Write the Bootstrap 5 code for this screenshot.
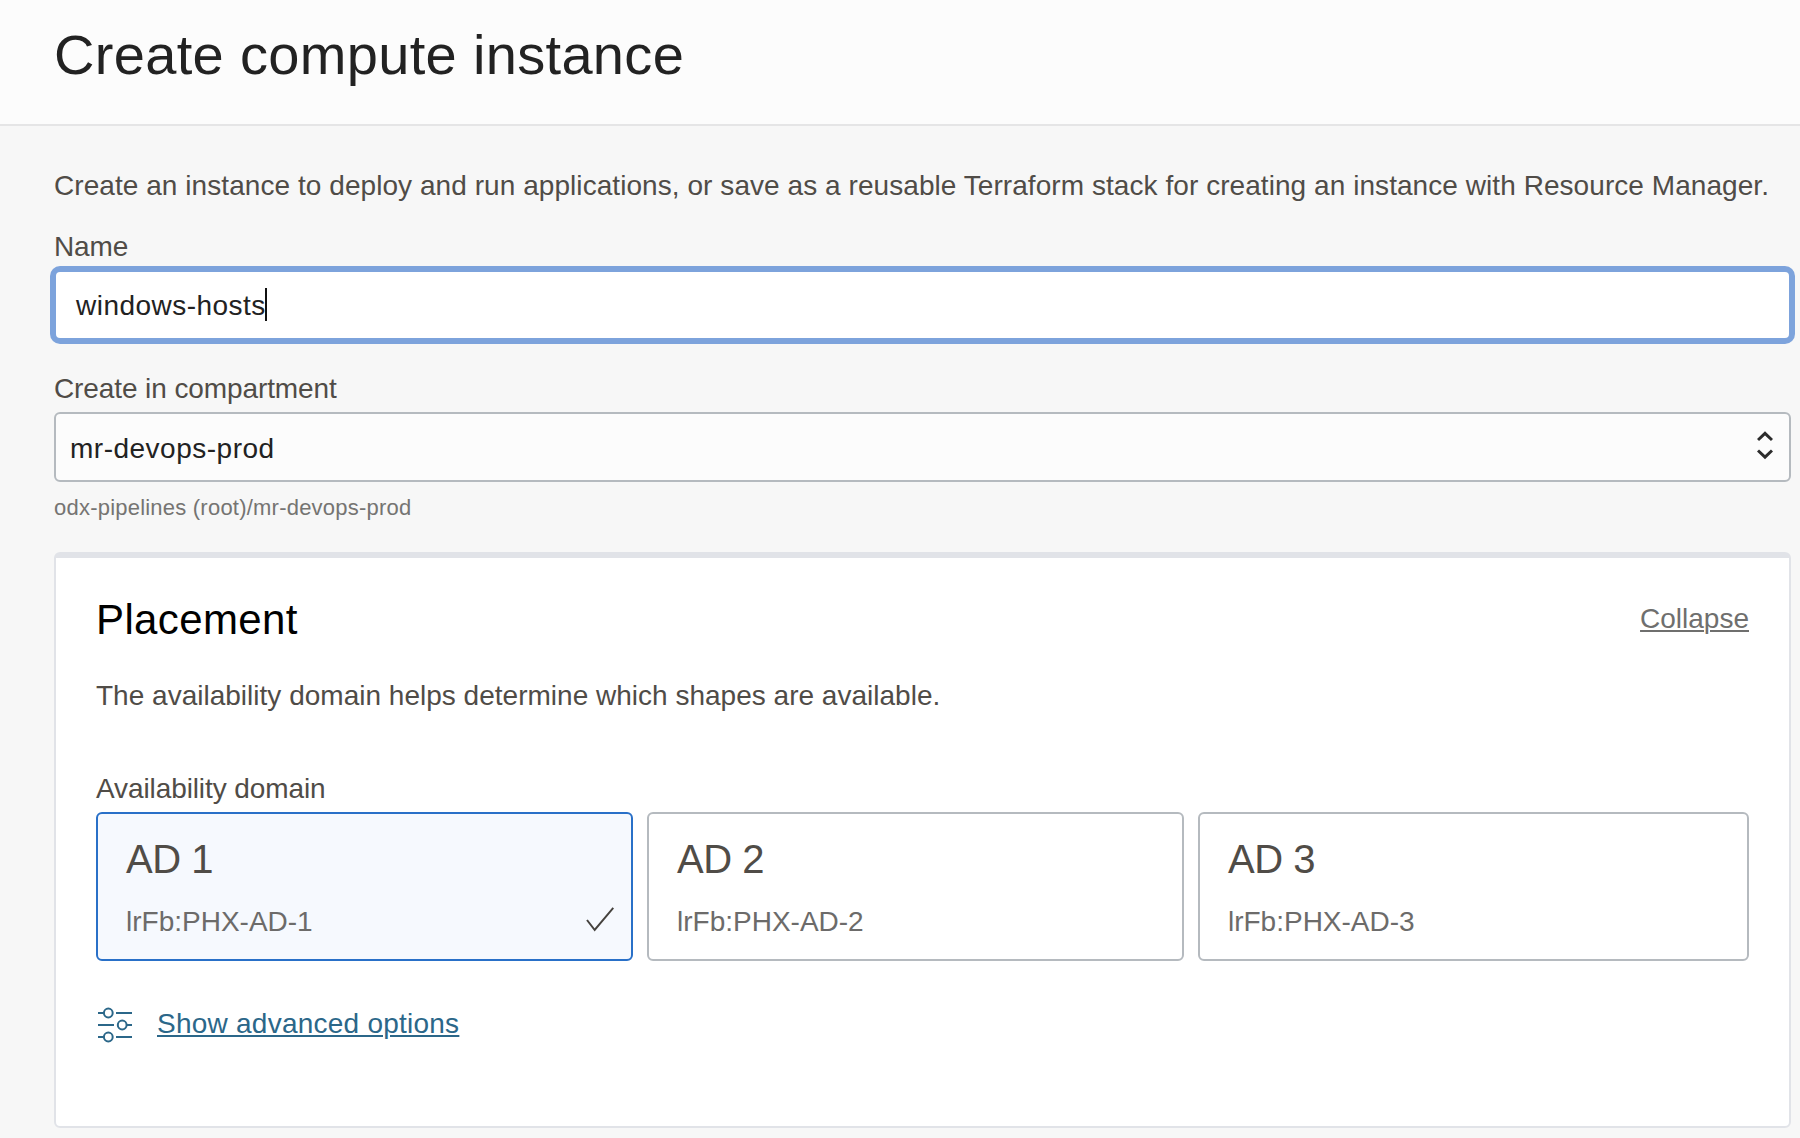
<!DOCTYPE html>
<html lang="en">
<head>
<meta charset="utf-8">
<meta name="viewport" content="width=device-width, initial-scale=1">
<title>Create compute instance</title>
<link href="https://cdn.jsdelivr.net/npm/bootstrap@5.3.0/dist/css/bootstrap.min.css" rel="stylesheet">
<style>
  body { font-family: "Liberation Sans", Arial, sans-serif; font-size: 28px; line-height: 38px; color: #504c47; background: #f7f7f7; min-height: 1138px; overflow: hidden; }
  .page-head { height: 126px; background: #fcfcfc; border-bottom: 2px solid #e5e5e6; padding: 23px 0 0 54px; }
  .page-title { font-size: 56px; line-height: 64px; font-weight: 400; color: #222; letter-spacing: .33px; }
  .page-main { padding: 41px 9px 0 54px; }
  .intro { margin-bottom: 23px; letter-spacing: .06px; white-space: nowrap; }
  .form-label { margin-bottom: 4px; display: block; letter-spacing: -.1px; }
  .field-box { height: 70px; border: 2px solid #b5babf; border-radius: 6px; color: #222; background: #fcfcfc; }
  .field-focus { border-color: #7da3dc; box-shadow: 0 0 0 4px #7da3dc; background: #fff; padding: 2px 0 0 20px; margin-bottom: 30px; letter-spacing: .47px; }
  .field-select { padding: 4px 16px 0 14px; letter-spacing: .5px; }
  .chevrons { margin-top: -8px; }
  .text-caret { width: 2px; height: 33px; background: #111; margin: -3px 0 0 -1px; }
  .path-hint { font-size: 22px; line-height: 30px; color: #757472; letter-spacing: .22px; margin: 11px 0 29px; }
  .placement { height: 576px; border: 2px solid #e1e3e8; border-top-width: 6px; border-radius: 6px; background: #fff; }
  .placement .card-body { padding: 36px 40px 0; }
  .section-title { font-size: 42px; line-height: 52px; font-weight: 400; color: #000; letter-spacing: .38px; }
  .section-text { margin: 31px 0 55px; letter-spacing: .01px; }
  a { text-decoration-thickness: 2px; text-underline-offset: 2px; }
  .link-collapse { color: #6f6f6e; margin-top: 6px; }
  .link-advanced { color: #2b6789; letter-spacing: .24px; margin-left: 23px; }
  .ad-gap { padding-right: 14px; }
  .ad-tile { height: 149px; border: 2px solid #b5babf; border-radius: 6px; padding: 21px 17px 0 28px; }
  .ad-selected { border-color: #2970c8; background: #f6f9fe; }
  .ad-name { font-size: 40px; line-height: 48px; letter-spacing: -.5px; margin-bottom: 20px; }
  .ad-id { color: #6c6b6a; }
  .advanced { margin-top: 44px; }
</style>
<script src="https://cdn.jsdelivr.net/npm/bootstrap@5.3.0/dist/js/bootstrap.bundle.min.js"></script>
</head>
<body>
<header class="page-head">
  <h1 class="page-title m-0">Create compute instance</h1>
</header>
<main class="page-main">
  <p class="intro">Create an instance to deploy and run applications, or save as a reusable Terraform stack for creating an instance with Resource Manager.</p>

  <div class="form-label">Name</div>
  <div class="field-box field-focus d-flex align-items-center"><span>windows-hosts</span><span class="text-caret"></span></div>

  <div class="form-label">Create in compartment</div>
  <div class="field-box field-select d-flex align-items-center justify-content-between">
    <span>mr-devops-prod</span>
    <svg class="chevrons" width="16" height="30" viewBox="0 0 16 30" fill="none" stroke="#2c2c2c" stroke-width="3"><path d="M1 10 8 3.3 15 10M1 20.5 8 27.2 15 20.5"/></svg>
  </div>
  <p class="path-hint">odx-pipelines (root)/mr-devops-prod</p>

  <section class="card placement">
    <div class="card-body">
      <div class="d-flex justify-content-between align-items-start">
        <h2 class="section-title m-0">Placement</h2>
        <a href="#" class="link-collapse">Collapse</a>
      </div>
      <p class="section-text">The availability domain helps determine which shapes are available.</p>
      <div class="form-label">Availability domain</div>
      <div class="row g-0">
        <div class="col-4 ad-gap">
          <div class="ad-tile ad-selected">
            <div class="ad-name">AD 1</div>
            <div class="d-flex justify-content-between">
              <span class="ad-id">lrFb:PHX-AD-1</span>
              <svg width="28" height="28" viewBox="0 0 28 28" fill="none" stroke="#45423e" stroke-width="2" class="mt-1"><path d="M1 13 8.7 23 27.3.8"/></svg>
            </div>
          </div>
        </div>
        <div class="col-4 ad-gap">
          <div class="ad-tile">
            <div class="ad-name">AD 2</div>
            <div class="ad-id">lrFb:PHX-AD-2</div>
          </div>
        </div>
        <div class="col-4">
          <div class="ad-tile">
            <div class="ad-name">AD 3</div>
            <div class="ad-id">lrFb:PHX-AD-3</div>
          </div>
        </div>
      </div>
      <div class="advanced d-flex align-items-start">
        <svg width="38" height="38" viewBox="0 0 38 38" fill="none" stroke="#2b6789" stroke-width="2"><path d="M2 8H7M20 8H36M2 20H18M31 20H36M2 32H7M20 32H36"/><circle cx="12.3" cy="8" r="4.4"/><circle cx="26.2" cy="20" r="4.4"/><circle cx="12.3" cy="32" r="4.4"/></svg>
        <a href="#" class="link-advanced">Show advanced options</a>
      </div>
    </div>
  </section>
</main>
</body>
</html>
